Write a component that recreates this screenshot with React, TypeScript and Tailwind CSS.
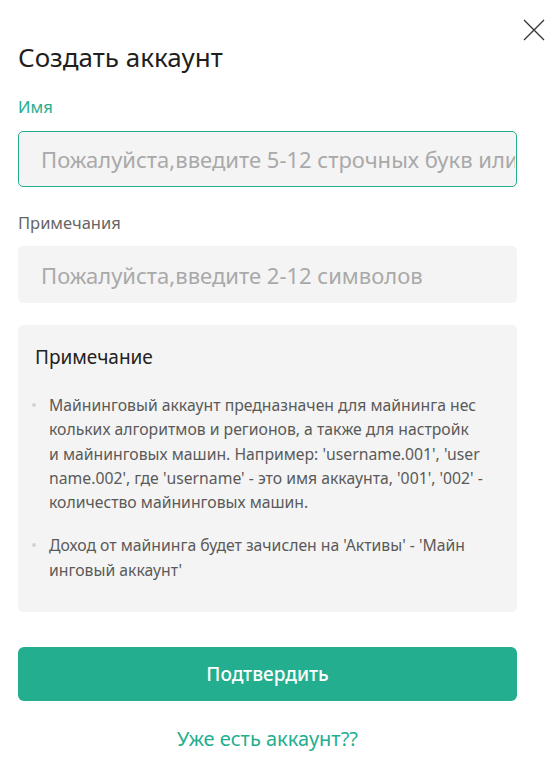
import React from 'react';

const font = { fontFamily: '"Noto Sans", "Open Sans", sans-serif' };

// lines broken as in the design (break-all wrapping)
const notes = [
  [
    'Майнинговый аккаунт предназначен для майнинга нес',
    'кольких алгоритмов и регионов, а также для настройк',
    "и майнинговых машин. Например: 'username.001', 'user",
    "name.002', где 'username' - это имя аккаунта, '001', '002' -",
    'количество майнинговых машин.',
  ],
  ["Доход от майнинга будет зачислен на 'Активы' - 'Майн", "инговый аккаунт'"],
];

export default function App() {
  return (
    <div className="relative w-[553px] h-[757px] bg-white overflow-hidden" style={font}>
      <button className="absolute right-[8px] top-[19px] w-[22px] h-[22px] text-[#333]">
        <svg viewBox="0 0 22 22" className="w-full h-full" fill="none" stroke="currentColor" strokeWidth="1.3">
          <path d="M1 1L21 21M21 1L1 21" />
        </svg>
      </button>

      <div className="pl-[18px] pr-[36px] pt-[39px]">
        <h2 className="text-[26px] leading-[36px] text-[#1f1f1f]">Создать аккаунт</h2>

        <div className="mt-[20px] text-[16.5px] leading-[24px] text-[#23ae8f]">Имя</div>
        <input
          className="mt-[12px] w-full h-[56px] rounded-[5px] border border-[#23ae8f] bg-[#f4f4f4] pl-[22px] pr-[1px] text-[22px] outline-none placeholder:text-[#a9a9a9]"
          placeholder="Пожалуйста,введите 5-12 строчных букв или цифр"
        />

        <div className="mt-[24px] text-[16.5px] leading-[24px] text-[#666]">Примечания</div>
        <input
          className="mt-[11px] w-full h-[57px] rounded-[5px] bg-[#f4f4f4] px-[23px] text-[22px] outline-none placeholder:text-[#a9a9a9]"
          placeholder="Пожалуйста,введите 2-12 символов"
        />

        <div className="mt-[22px] h-[287px] rounded-[5px] bg-[#f4f4f4] pl-[17px] pr-[10px] pt-[18px]">
          <div className="text-[19px] leading-[28px] text-[#222]">Примечание</div>
          <ul className="mt-[22px] pl-[14px] flex flex-col gap-[19px]">
            {notes.map((lines, i) => (
              <li key={i} className="relative text-[15.75px] leading-[24.3px] text-[#5a5a5a] whitespace-nowrap">
                <span className="absolute -left-[17px] top-[10px] w-[4px] h-[4px] rounded-full bg-[#d4d4d4]" />
                {lines.map((l, j) => (
                  <div key={j}>{l}</div>
                ))}
              </li>
            ))}
          </ul>
        </div>

        <button className="mt-[35px] w-full h-[54px] rounded-[6px] bg-[#23ae8f] text-white text-[19px] font-medium">
          Подтвердить
        </button>

        <div className="mt-[24px] text-center text-[20px] leading-[28px] text-[#23ae8f]">Уже есть аккаунт??</div>
      </div>
    </div>
  );
}
